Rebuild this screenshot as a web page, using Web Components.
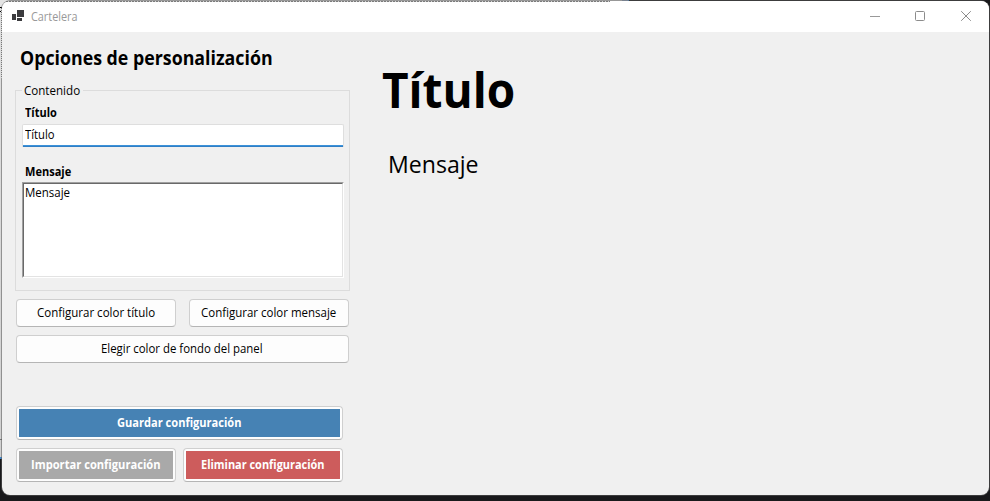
<!DOCTYPE html>
<html lang="es">
<head>
<meta charset="utf-8">
<title>Cartelera</title>
<style>
html,body{margin:0;width:990px;height:501px;overflow:hidden;background:#19191b;font-family:"Open Sans","Noto Sans",sans-serif;font-size:12px;color:#000}
</style>
</head>
<body>
<desk-top>
<app-window>
  <title-bar slot="bar"><fit-text w="47">Cartelera</fit-text></title-bar>
  <side-panel slot="side">
    <fit-text slot="heading" w="252.5">Opciones de personalización</fit-text>
    <group-box>
      <fit-text slot="legend" w="56">Contenido</fit-text>
      <text-field>
        <fit-text slot="label" w="32">Título</fit-text>
        <fit-text w="30">Título</fit-text>
      </text-field>
      <text-field multiline>
        <fit-text slot="label" w="46">Mensaje</fit-text>
        <fit-text w="45">Mensaje</fit-text>
      </text-field>
    </group-box>
    <button-row style="--gap:13px;--top:8px">
      <push-button style="--w:160px;--shift:-1px"><fit-text w="118">Configurar color título</fit-text></push-button>
      <push-button style="--w:160px;--shift:-1px"><fit-text w="135">Configurar color mensaje</fit-text></push-button>
    </button-row>
    <button-row style="--top:8px">
      <push-button style="--w:333px;--shift:-1px"><fit-text w="161.5">Elegir color de fondo del panel</fit-text></push-button>
    </button-row>
    <button-row style="--top:43px">
      <push-button fill style="--w:327px;--fill:#4682b4"><fit-text w="124.5">Guardar configuración</fit-text></push-button>
    </button-row>
    <button-row style="--gap:7px;--top:8px">
      <push-button fill style="--w:160px;--fill:#a9a9a9"><fit-text w="130">Importar configuración</fit-text></push-button>
      <push-button fill style="--w:160px;--fill:#cd5c5c;--shift:-1px"><fit-text w="124">Eliminar configuración</fit-text></push-button>
    </button-row>
  </side-panel>
  <preview-panel slot="main">
    <fit-text slot="title" w="133">Título</fit-text>
    <fit-text slot="message" w="90.5">Mensaje</fit-text>
  </preview-panel>
</app-window>
</desk-top>
<script>
const define = (name, html, setup) => {
  const template = document.createElement('template');
  template.innerHTML = html;
  customElements.define(name, class extends HTMLElement {
    constructor() {
      super();
      this.attachShadow({mode: 'open'}).append(template.content.cloneNode(true));
    }
    connectedCallback() { if (setup) setup(this); }
  });
};

define('desk-top', `<style>
:host{display:block;box-sizing:border-box;width:990px;height:501px;padding:1px 1px 5px 2px;
background:
linear-gradient(#000,#000) 0 7px/2px 1px no-repeat,
linear-gradient(#000,#000) 0 11px/2px 1px no-repeat,
linear-gradient(#777,#777) 0 439px/2px 1px no-repeat,
linear-gradient(#3f87cc,#3f87cc) 0 457px/2px 2px no-repeat,
linear-gradient(#9fb4d0,#9fb4d0) 622px 0/6px 2px no-repeat,
linear-gradient(#4aa3f0,#4aa3f0) 628px 0/1px 2px no-repeat,
linear-gradient(#e4e4e4,#e4e4e4) 0 0/622px 10px no-repeat,
linear-gradient(#e0e0e0,#d0d0d0) 0 0/10px 457px no-repeat,
#19191b}
</style><slot></slot>`);

define('app-window', `<style>
:host{display:grid;grid-template:31px 1fr/350px 1fr;width:987px;height:494px;border-radius:8px;background:#f0f0f0;position:relative;
box-shadow:0 0 0 1px rgba(90,90,90,.55)}
slot[name=bar]{display:block;grid-column:1/3}
.edge{position:absolute;pointer-events:none}
.top{left:4px;top:0;width:604px;height:1px;background:repeating-linear-gradient(90deg,#7b7b7b 0 2px,#d4d4d4 2px 3px)}
.left{left:-1px;top:7px;width:1px;height:70px;background:repeating-linear-gradient(#777 0 1px,#d4d4d4 1px 2px)}
</style><slot name="bar"></slot><slot name="side"></slot><slot name="main"></slot><div class="edge top"></div><div class="edge left"></div>`);

define('title-bar', `<style>
:host{display:flex;height:31px;background:#fff;color:#999;box-sizing:border-box;padding:0 17px 0 10px;border-radius:8px 8px 0 0}
.logo{margin-top:9px;width:12px;height:11px}
.name{margin:7px 0 0 7px}
.ctl{margin-left:auto;display:flex;gap:34px;margin-top:9px}
svg{display:block}
</style>
<svg class="logo" viewBox="0 0 12 11" shape-rendering="crispEdges"><path fill="#3b3b3e" d="M5 0h7v7H5zM0 4h4v6H0zM5 8h5v3H5z"/></svg>
<div class="name"><slot></slot></div>
<div class="ctl">
<svg width="11" height="11" viewBox="0 0 11 11"><path d="M0 6.5h10" stroke="#999"/></svg>
<svg width="11" height="11" viewBox="0 0 11 11"><rect x=".5" y="1.5" width="9" height="9" rx="1" fill="none" stroke="#8c8c8c"/></svg>
<svg width="12" height="11" viewBox="0 0 12 11"><path d="M1.2 1.2l9.6 9.6M10.8 1.2L1.2 10.8" stroke="#8c8c8c" fill="none"/></svg>
</div>`);

define('side-panel', `<style>
:host{display:block;padding:14px 0 0 13px}
.h{font-size:18.67px;line-height:24px;font-weight:700;padding-left:5px;height:24px}
</style><div class="h"><slot name="heading"></slot></div><slot></slot>`);

define('group-box', `<style>
:host{display:block;margin-top:11px;width:335px}
fieldset{box-sizing:border-box;height:210px;margin:0;min-width:0;border:1px solid #dcdcdc;padding:6px 5px 0 6px}
legend{line-height:16px;height:16px;padding:2px 3px 0 2px;margin-left:0}
</style><fieldset><legend><slot name="legend"></slot></legend><slot></slot></fieldset>`);

define('text-field', `<style>
:host{display:block}
.l{font-weight:700;line-height:16px;height:16px;padding-left:3px}
.b{box-sizing:border-box;height:23px;width:322px;margin-top:3px;background:linear-gradient(#429ce3,#2a75bb) 0 100%/100% 2px no-repeat #fff;
padding:2px 0 0 2px;border:1px solid #dedede;border-bottom:0;border-radius:2px 2px 0 0;line-height:16px}
:host([multiline]){margin-top:17px}
:host([multiline]) .b{margin-top:2px;width:322px;height:96px;background:#fff;border:1px solid;border-color:#a0a0a0 #fff #fff #a0a0a0;border-radius:0;padding:0}
:host([multiline]) .i{box-sizing:border-box;height:94px;border:1px solid;border-color:#696969 #e3e3e3 #e3e3e3 #696969;padding:1px 0 0 1px}
</style><div class="l"><slot name="label"></slot></div><div class="b"><div class="i"><slot></slot></div></div>`);

define('button-row', `<style>
:host{display:flex;gap:var(--gap,0);margin:var(--top) 0 0 1px}
</style><slot></slot>`);

define('push-button', `<style>
:host{display:block;width:var(--w)}
button{all:unset;box-sizing:border-box;display:flex;justify-content:center;width:100%;height:28px;border:1px solid #cfcfcf;border-bottom-color:#b5b5b5;border-radius:4px;background:#fdfdfd;padding-top:5px;line-height:16px}
:host([fill]) button{height:34px;padding:2px;font-weight:700;color:#fff}
.f{display:contents}
:host([fill]) .f{display:flex;flex:1;justify-content:center;background:var(--fill);padding-top:6px;box-sizing:border-box}
slot{display:block;margin-left:var(--shift,0)}
</style><button><div class="f"><slot></slot></div></button>`);

define('preview-panel', `<style>
:host{display:block;padding:26px 0 0 30px}
.t{font-size:48px;line-height:64px;font-weight:700}
.m{font-size:24px;line-height:32px;padding-left:5.5px;margin-top:26px}
</style><div class="t"><slot name="title"></slot></div><div class="m"><slot name="message"></slot></div>`);

/* Renders its text condensed or expanded to exactly the width in "w". */
define('fit-text', `<style>
:host{display:block;width:var(--fit)}
span{display:inline-block;vertical-align:top;white-space:nowrap;transform-origin:0 0}
</style><span><slot></slot></span>`, el => {
  const w = parseFloat(el.getAttribute('w'));
  el.style.setProperty('--fit', w + 'px');
});
for (const el of document.querySelectorAll('fit-text')) {
  const span = el.shadowRoot.querySelector('span');
  span.style.transform = 'scaleX(' + parseFloat(el.getAttribute('w')) / span.offsetWidth + ')';
}
</script>
</body>
</html>
